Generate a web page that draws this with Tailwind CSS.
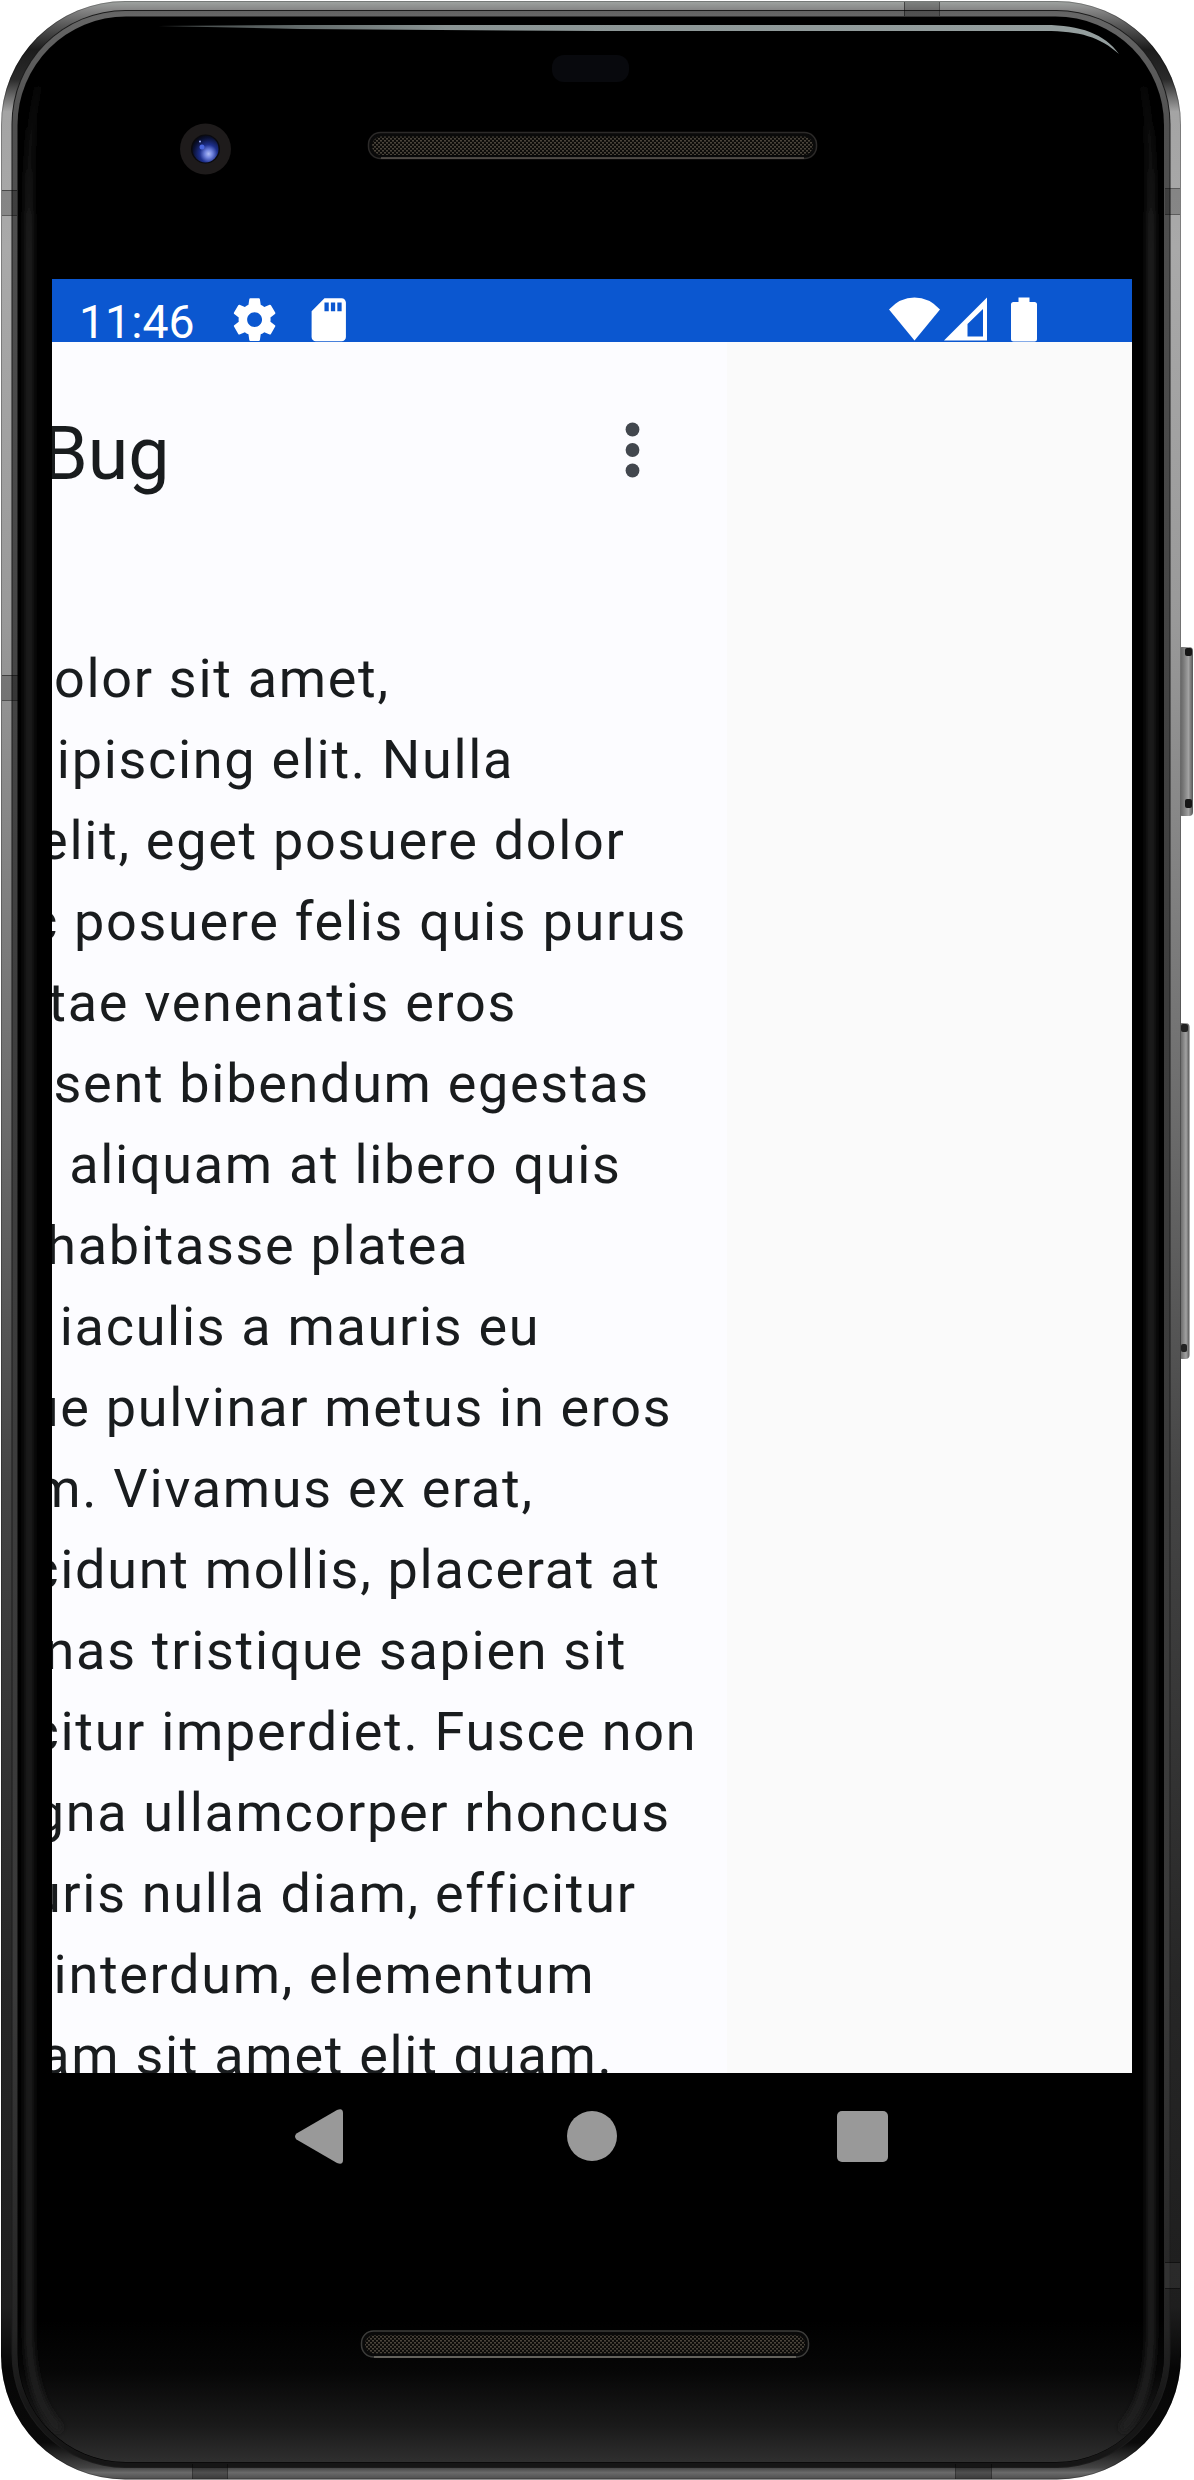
<!DOCTYPE html>
<html lang="en"><head><meta charset="utf-8"><title>Bug</title>
<script src="https://cdn.jsdelivr.net/npm/@tailwindcss/browser@4"></script></head>
<body class="bg-white">
<div class="relative w-[1194px] h-[2480px] overflow-hidden font-['Roboto',sans-serif]">
<svg class="absolute inset-0" width="1194" height="2480" viewBox="0 0 1194 2480">
<defs>
<linearGradient id="rim" gradientUnits="userSpaceOnUse" x1="0" y1="0" x2="0" y2="2480">
<stop offset="0" stop-color="#a3a8a5"/><stop offset=".004" stop-color="#858585"/><stop offset=".010" stop-color="#5a5a5a"/><stop offset=".02" stop-color="#1c1c1c"/><stop offset=".032" stop-color="#2a2a2a"/><stop offset=".045" stop-color="#a4a4a4"/><stop offset=".1" stop-color="#a9a9a9"/><stop offset=".25" stop-color="#999"/><stop offset=".45" stop-color="#6c6c6c"/><stop offset=".6" stop-color="#444"/><stop offset=".8" stop-color="#262626"/><stop offset=".93" stop-color="#1e1e1e"/><stop offset=".955" stop-color="#060606"/><stop offset=".985" stop-color="#0a0a0a"/><stop offset=".995" stop-color="#444"/><stop offset=".997" stop-color="#6a6a6a"/><stop offset="1" stop-color="#4a4a4a"/></linearGradient>
<linearGradient id="rim2" gradientUnits="userSpaceOnUse" x1="0" y1="0" x2="0" y2="2480">
<stop offset="0" stop-color="#555"/><stop offset=".006" stop-color="#666"/><stop offset=".05" stop-color="#505050"/><stop offset=".4" stop-color="#3e3e3e"/><stop offset=".8" stop-color="#3a3a3a"/><stop offset=".94" stop-color="#242424"/><stop offset=".97" stop-color="#161616"/><stop offset="1" stop-color="#161616"/></linearGradient>
<linearGradient id="chin" x1="0" y1="0" x2="0" y2="1"><stop offset="0" stop-color="#000"/><stop offset=".35" stop-color="#060606"/><stop offset=".75" stop-color="#1a1a1a"/><stop offset="1" stop-color="#2f2f2f"/></linearGradient>
<linearGradient id="edge" gradientUnits="userSpaceOnUse" x1="0" y1="60" x2="0" y2="2440"><stop offset="0" stop-color="#222" stop-opacity="0"/><stop offset=".08" stop-color="#242424"/><stop offset="1" stop-color="#242424"/></linearGradient>
<linearGradient id="shine"><stop offset="0" stop-color="#7f8a8a" stop-opacity=".5"/><stop offset=".3" stop-color="#8a9494"/><stop offset="1" stop-color="#959f9f"/></linearGradient>
<linearGradient id="btn"><stop offset="0" stop-color="#555"/><stop offset=".35" stop-color="#777"/><stop offset=".7" stop-color="#a2a2a2"/><stop offset="1" stop-color="#555"/></linearGradient>
<radialGradient id="lens" cx=".62" cy=".68" r=".75"><stop offset="0" stop-color="#b0bdf5"/><stop offset=".2" stop-color="#6f82dd"/><stop offset=".45" stop-color="#1d2f8c"/><stop offset=".8" stop-color="#0a1030"/><stop offset="1" stop-color="#05060c"/></radialGradient>
<pattern id="mesh" width="4" height="4" patternUnits="userSpaceOnUse"><rect width="4" height="4" fill="#0c0b09"/><rect width="2" height="1.6" fill="#4a443b"/><rect x="2" y="2" width="2" height="1.6" fill="#4a443b"/></pattern>
<filter id="soft" filterUnits="userSpaceOnUse" x="0" y="0" width="1194" height="2480"><feGaussianBlur stdDeviation="3"/></filter>
<clipPath id="glass"><rect x="18" y="17" width="1146" height="2445" rx="108"/></clipPath>
</defs>
<!-- side buttons -->
<rect x="1178" y="647" width="15" height="169" rx="4" fill="url(#btn)"/><rect x="1185" y="648" width="7" height="8" rx="2" fill="#161616"/><rect x="1185" y="799" width="7" height="9" rx="2" fill="#161616"/>
<rect x="1178" y="1023" width="11.500" height="336" rx="4" fill="url(#btn)"/><rect x="1181" y="1024" width="7" height="8" rx="2" fill="#222"/><rect x="1181" y="1344" width="6" height="8" rx="2" fill="#222"/>
<!-- metal rim -->
<rect x="1" y="1" width="1180" height="2478.500" rx="124" fill="url(#rim)"/>
<rect x="1.500" y="1.500" width="1179" height="2477.500" rx="123.500" fill="none" stroke="#000" stroke-opacity=".25"/>
<rect x="11.500" y="10" width="1159" height="2458" rx="114" fill="#1c1c1c"/>
<rect x="12.500" y="11" width="1157" height="2456" rx="113" fill="url(#rim2)"/>
<!-- antenna breaks -->
<path d="M2 190H17V215H2ZM2 675H18V700H2ZM1165 189H1180V214H1165ZM904 2H939V16H904Z" fill="#000" fill-opacity=".2"/>
<path d="M2 190.500H17M2 215.500H17M2 675.500H18M2 700.500H18M1165 188.500H1180M1165 214.500H1180M1165 2262.500H1180M1165 2288.500H1180M904.500 2V16M939.500 2V16M192.500 2464V2479M227.500 2464V2479M955.500 2464V2479M991.500 2464V2479" fill="none" stroke="#000" stroke-opacity=".45"/>
<path d="M193 2467H227V2479H193ZM956 2467H991V2479H956Z" fill="#000" fill-opacity=".25"/>
<path d="M1165 2263H1180V2288H1165Z" fill="#fff" fill-opacity=".05"/>
<!-- glass -->
<rect x="17.500" y="16.500" width="1146.500" height="2446" rx="108.500" fill="#000"/>
<g clip-path="url(#glass)"><rect x="18" y="2320" width="1146" height="142" fill="url(#chin)"/>
<path d="M40 80Q29 120 29 190V2330Q29 2400 60 2430M1142 80Q1151 120 1151 190V2330Q1151 2400 1122 2430" fill="none" stroke="url(#edge)" stroke-width="8" filter="url(#soft)"/></g>
<path d="M158 26 L300 25H1045 C1080 25 1105 34 1119 54 C1100 37 1080 31 1045 31 H600 L300 29Z" fill="url(#shine)"/>
<rect x="552" y="55" width="77" height="27" rx="12" fill="#08090d"/>
<!-- front camera -->
<circle cx="205.500" cy="149" r="25.500" fill="#1e1b1b"/><circle cx="205.500" cy="149" r="14.500" fill="#0a0a0e"/><ellipse cx="205.500" cy="149" rx="13" ry="13.500" fill="url(#lens)"/><circle cx="202" cy="147" r="2.500" fill="#4a66dd"/><circle cx="200" cy="141.500" r="1" fill="#9fb0ff"/>
<!-- speakers -->
<rect x="368.500" y="132.500" width="448" height="26" rx="12" fill="#0a0a0a" stroke="#2c2a29" stroke-width="1.500"/><rect x="372" y="136.500" width="441" height="18.500" rx="9" fill="url(#mesh)"/><path d="M381 158H804" stroke="#5b5650" stroke-width="1.500"/>
<rect x="361.500" y="2331" width="447" height="26" rx="12" fill="#0a0a0a" stroke="#3c3c3a" stroke-width="1.500"/><rect x="365" y="2335" width="440" height="18.500" rx="9" fill="url(#mesh)"/><path d="M374 2357H796" stroke="#77756c" stroke-width="1.500"/>
</svg>

<div class="relative ml-[52px] mt-[279px] w-[1080px]">
<header class="h-[63px] bg-[#0b57d0] text-white flex items-start pt-[14px] pl-[27px]">
<span class="text-[46.4px] leading-[56px] w-[150px] mt-px h-[48px] whitespace-nowrap">11:46</span>
<svg class="size-[51.2px] mt-[1px]" viewBox="0 0 24 24" fill="currentColor"><path d="M19.430 12.980c.04-.32.07-.64.07-.98s-.03-.66-.07-.98l2.110-1.650c.19-.15.24-.42.12-.64l-2-3.460c-.12-.22-.39-.3-.61-.22l-2.490 1c-.52-.4-1.080-.73-1.690-.98l-.38-2.650C14.460 2.180 14.250 2 14 2h-4c-.25 0-.46.18-.49.42l-.38 2.650c-.61.25-1.170.59-1.690.98l-2.490-1c-.23-.09-.49 0-.61.22l-2 3.460c-.13.22-.07.49.12.64l2.110 1.650c-.04.32-.07.65-.07.98s.03.66.07.98l-2.110 1.650c-.19.15-.24.42-.12.64l2 3.460c.12.22.39.3.61.22l2.490-1c.52.4 1.080.73 1.690.98l.38 2.650c.03.24.24.42.49.42h4c.25 0 .46-.18.49-.42l.38-2.650c.61-.25 1.170-.59 1.690-.98l2.490 1c.23.09.49 0 .61-.22l2-3.460c.12-.22.07-.49-.12-.64l-2.110-1.650zM12 15.500c-1.930 0-3.500-1.570-3.500-3.500s1.570-3.500 3.500-3.500 3.500 1.570 3.500 3.500-1.570 3.500-3.500 3.500z"/></svg>
<svg class="size-[51.5px] ml-[23px] mt-[1px]" viewBox="0 0 24 24" fill="currentColor"><path d="M18 2h-8L4.020 8 4 20c0 1.100.9 2 2 2h12c1.100 0 2-.9 2-2V4c0-1.100-.9-2-2-2zm-6 6h-2V4h2v4zm3 0h-2V4h2v4zm3 0h-2V4h2v4z"/></svg>
<div class="ml-auto mr-[95px] flex mt-[3.500px]">
<svg class="w-[51px] h-[44px]" viewBox="0 0 51 44" fill="currentColor"><path d="M0 12.500Q11 .5 25.500.5T51 12.500L25.500 43.500Z"/></svg>
<svg class="w-[43px] h-[44px] ml-[4px]" viewBox="0 0 43 44" fill="currentColor" fill-rule="evenodd"><path d="M43 .5V43.500H0ZM39 12L23.500 27V39.500H39Z"/></svg>
<svg class="w-[26px] h-[45px] ml-[24px]" viewBox="0 0 26 45" fill="currentColor"><path d="M7.500 .5H18.500V5H23.500Q26 5 26 7.500V42Q26 44.500 23.500 44.500H2.500Q0 44.500 0 42V7.500Q0 5 2.500 5H7.500Z"/></svg>
</div>
</header>
<main class="h-[1731px] bg-[#fafafa] overflow-hidden">
<div class="w-[675px] h-full bg-[#fcfcff] text-[#191c1e]">
<div class="flex items-center h-[218px] pt-[5px]">
<h1 class="-ml-[10px] text-[73.500px] leading-[88px]">Bug</h1>
<svg class="ml-auto mr-[87px] -mt-[7px]" width="15" height="56" viewBox="0 0 15 56" fill="#42474e"><circle cx="7.500" cy="7.500" r="6.900"/><circle cx="7.500" cy="28" r="6.900"/><circle cx="7.500" cy="48.500" r="6.900"/></svg>
</div>
<div class="mt-[78px] text-[54px] leading-[81px] tracking-[0.03125em] whitespace-nowrap">
<p class="ml-[2px]">olor sit amet,</p>
<p class="-ml-[27.300px]">dipiscing elit. Nulla</p>
<p class="-ml-[12.900px]">elit, eget posuere dolor</p>
<p class="-ml-[23px]">c posuere felis quis purus</p>
<p class="-ml-[3.700px]">tae venenatis eros</p>
<p class="ml-[1.500px]">sent bibendum egestas</p>
<p class="ml-[17.200px]">aliquam at libero quis</p>
<p class="-ml-[5.800px]">habitasse platea</p>
<p class="ml-[7.800px]">iaculis a mauris eu</p>
<p class="-ml-[23.200px]">ue pulvinar metus in eros</p>
<p class="-ml-[18.700px]">m. Vivamus ex erat,</p>
<p class="-ml-[21.700px]">cidunt mollis, placerat at</p>
<p class="-ml-[7.400px]">nas tristique sapien sit</p>
<p class="-ml-[21.500px]">citur imperdiet. Fusce non</p>
<p class="-ml-[18.300px]">gna ullamcorper rhoncus</p>
<p class="-ml-[21.100px]">uris nulla diam, efficitur</p>
<p class="ml-[1.600px]">interdum, elementum</p>
<p class="-ml-[11.700px]">am sit amet elit quam.</p>
</div>
</div>
</main>
<nav class="flex items-center h-[126px] text-[#999]">
<svg class="ml-[243px]" width="48" height="55" viewBox="0 0 48 55" fill="currentColor"><path d="M1.500 24.500Q-1.500 27.500 1.500 30.500L42 54Q48 56.500 48 51V4Q48-1.500 42 1Z"/></svg>
<div class="ml-[224px] size-[49.500px] rounded-full bg-[#999]"></div>
<div class="ml-[220.500px] size-[51px] rounded-[5px] bg-[#999]"></div>
</nav>
</div>
</div>
</body></html>
